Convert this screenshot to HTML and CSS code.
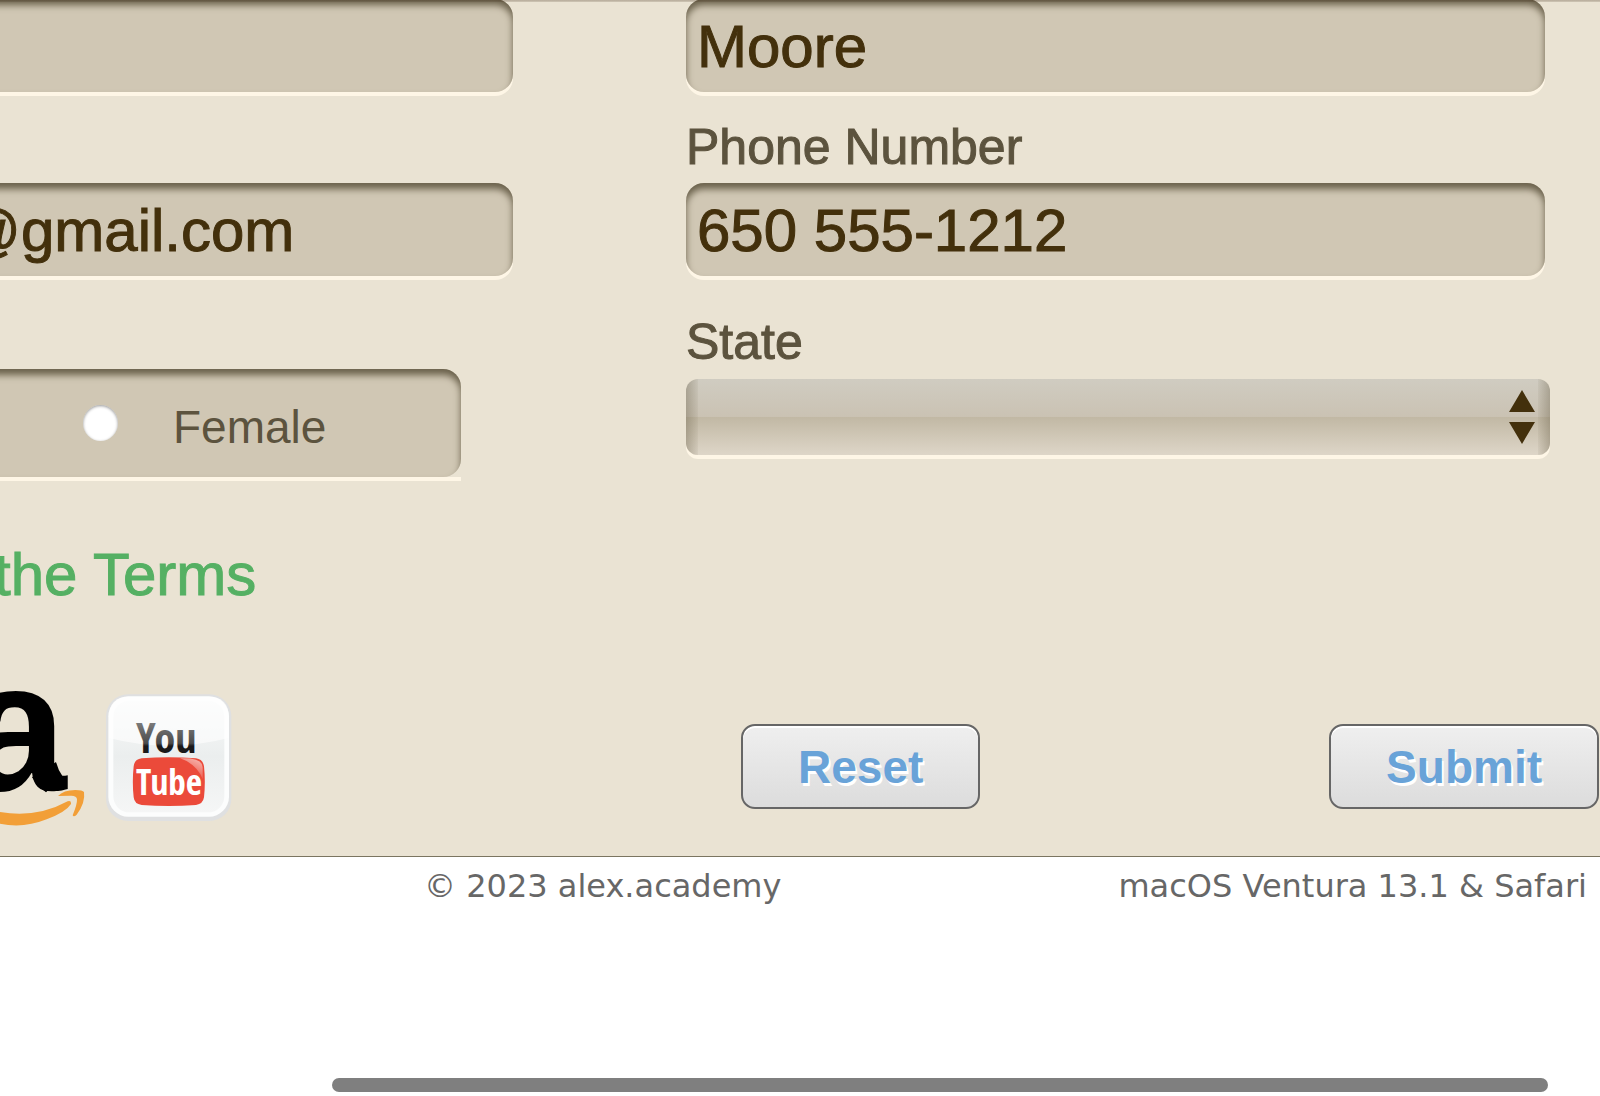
FILE: index.html
```html
<!DOCTYPE html>
<html lang="en">
<head>
<meta charset="utf-8">
<meta name="viewport" content="width=device-width, initial-scale=1">
<title>alex.academy</title>
<link rel="stylesheet" href="styles.css">
</head>
<body>
<form class="form">
  <div class="column column-left">
    <input class="field" type="text" aria-label="First Name">
    <input class="field field-email" type="text" aria-label="Email" value="@gmail.com">
    <div class="choice-wrap">
      <div class="choice">
        <input class="radio" type="radio" id="female" name="gender">
        <label class="choice-label" for="female">Female</label>
      </div>
    </div>
    <a class="terms" href="#terms">the Terms</a>
    <div class="social">
      <a class="social-link" href="#amazon" aria-label="Amazon">
        <svg class="amazon" viewBox="0 60 261 411">
          <text class="amazon-letter" x="-107" y="360">a</text>
          <path d="M96 322L168 276Q174 300 189 321L138 367Q116 352 96 322Z"/>
          <path fill="#f29f38" d="M0 426Q110 445 203 394Q214 390 213 402Q198 426 140 448Q70 476 0 461Z"/>
          <path fill="#f29f38" d="M174 378Q190 360 226 360Q248 360 252 366Q257 398 230 434Q221 442 218 436Q232 402 231 388Q230 376 211 377Z"/>
        </svg>
      </a>
      <a class="social-link" href="#youtube" aria-label="YouTube">
        <svg class="youtube" viewBox="318 70 378 381">
          <defs>
            <linearGradient id="tile" x1="0" y1="0" x2="0" y2="1">
              <stop offset="0" stop-color="#f8f9f9"/><stop offset=".5" stop-color="#ebeeee"/><stop offset="1" stop-color="#f5f6f6"/>
            </linearGradient>
            <linearGradient id="ink" gradientUnits="userSpaceOnUse" x1="0" y1="127" x2="0" y2="248">
              <stop offset="0" stop-color="#929292"/><stop offset=".75" stop-color="#4b4b4b"/><stop offset=".82" stop-color="#1b191a"/>
            </linearGradient>
            <linearGradient id="glint" x1="1" y1="0" x2=".5" y2="1">
              <stop offset="0" stop-color="#fff" stop-opacity=".65"/><stop offset="1" stop-color="#fff" stop-opacity="0"/>
            </linearGradient>
          </defs>
          <rect x="318" y="71" width="376" height="380" rx="66" fill="#dfe0e1"/>
          <rect x="325" y="77" width="362" height="361" rx="60" fill="#fcfdfd"/>
          <rect x="340" y="90" width="333" height="335" rx="48" fill="url(#tile)"/>
          <path fill="#fff" opacity=".6" d="M327 202V138Q327 78 388 78H625Q686 78 686 138V202Q506 248 327 202Z"/>
          <path fill="#eb4a3a" d="M425 263Q506 257 588 263Q609 266 612 287Q617 333 612 380Q609 400 588 403Q506 409 425 403Q403 400 401 380Q396 333 401 287Q403 266 425 263Z"/>
          <path fill="url(#glint)" d="M540 263Q608 260 608 290V325Q590 280 540 263Z"/>
          <text class="you-text" x="499" y="248" fill="url(#ink)">You</text>
          <text class="tube-text" x="507" y="374" fill="#fff">Tube</text>
        </svg>
      </a>
    </div>
  </div>
  <div class="column column-right">
    <input class="field" type="text" aria-label="Last Name" value="Moore">
    <label class="label" for="phone">Phone Number</label>
    <input class="field" type="tel" id="phone" value="650 555-1212">
    <label class="label label-state" for="state">State</label>
    <div class="select-wrap">
      <select class="select" id="state"><option></option></select>
      <svg class="arrows" viewBox="0 0 28 54"><path d="M14 0L27 22H1ZM14 54L27 32H1Z"/></svg>
    </div>
    <div class="actions">
      <button class="button" type="reset">Reset</button>
      <button class="button" type="submit">Submit</button>
    </div>
  </div>
</form>
<footer class="footer">
  <span>© 2023 alex.academy</span>
  <span>macOS Ventura 13.1 &amp; Safari</span>
</footer>
<div class="scrollbar"></div>
</body>
</html>
```
FILE: styles.css
```css
* {
  box-sizing: border-box;
}

html {
  background: #fff;
}

body {
  margin: 0;
  overflow-x: hidden;
  font-family: "Liberation Sans", Arial, sans-serif;
}

.form {
  position: relative;
  display: flex;
  gap: 173px;
  margin-left: -60px;
  padding-bottom: 29px;
  background: #eae3d3;
  border-bottom: 1px solid #7b7560;
}

.form::before {
  content: "";
  position: absolute;
  inset: 0 0 auto;
  height: 2px;
  background: linear-gradient(rgba(60, 40, 20, .3), rgba(60, 40, 20, .15));
}

.column {
  display: flex;
  flex-direction: column;
  align-items: flex-start;
  margin-top: -1px;
}

.column-left {
  flex: 0 0 573px;
}

.column-right {
  flex: 1;
  min-width: 0;
}

.field {
  width: 100%;
  height: 93px;
  margin: 0;
  padding: 2px 11px 0;
  border: 0;
  border-radius: 18px;
  outline: 0;
  background: #d0c7b4;
  box-shadow: inset 0 6px 7px #6a614b, 0 4px 0 #fef6e6;
  color: #43300c;
  font: 60px "Liberation Sans", Arial, sans-serif;
  -webkit-text-stroke: 1px;
}

.column-right .field {
  width: calc(100% - 55px);
}

.field-email {
  margin-top: 91px;
  padding-left: 20px;
}

.label {
  margin: 25px 0 6px;
  color: #5c533e;
  font-size: 50px;
  line-height: 60px;
  -webkit-text-stroke: 1px;
}

.label-state {
  margin: 36px 0 7px;
}

.choice-wrap {
  width: 521px;
  margin-top: 93px;
  border-bottom: 4px solid #fef6e6;
}

.choice {
  display: flex;
  align-items: center;
  gap: 55px;
  height: 108px;
  padding-left: 143px;
  border-radius: 18px;
  background: #d0c7b4;
  box-shadow: inset 0 6px 7px #6a614b;
}

.radio {
  appearance: none;
  width: 35px;
  height: 36px;
  margin: 0;
  border-radius: 50%;
  background: #fff;
  box-shadow: inset 0 1px 3px #999;
}

.choice-label {
  padding-top: 7px;
  color: #5c533e;
  font-size: 46px;
}

.terms {
  margin: 58px 0 0 54px;
  color: #55b063;
  font-size: 60px;
  line-height: 72px;
  text-decoration: none;
  -webkit-text-stroke: 1px;
}

.social {
  display: flex;
  align-items: flex-start;
  gap: 19px;
  margin: 79px 0 0 60px;
}

.social-link,
.social-link svg {
  display: block;
}

.amazon {
  width: 87px;
  height: 137px;
}

.amazon-letter {
  font: bold 552px "Liberation Sans", Arial, sans-serif;
}

.youtube {
  width: 126px;
  height: 127px;
  margin-top: 4px;
}

.you-text,
.tube-text {
  font: bold 126px "Liberation Sans Narrow", "Open Sans Condensed", "DejaVu Sans Condensed", sans-serif;
  text-anchor: middle;
}

.tube-text {
  font-size: 106px;
}

.select-wrap {
  position: relative;
  width: calc(100% - 50px);
}

.select {
  display: block;
  appearance: none;
  width: 100%;
  height: 76px;
  margin: 0;
  border: 0;
  border-radius: 12px;
  outline: 0;
  background:
    linear-gradient(90deg, rgba(90, 80, 55, .32), rgba(90, 80, 55, .06)) 0 0 / 12px 100% no-repeat,
    linear-gradient(270deg, rgba(90, 80, 55, .32), rgba(90, 80, 55, .06)) 100% 0 / 12px 100% no-repeat,
    linear-gradient(#d0ccc1, #cac2b3 50%, #c1b8a4 50%, #ded6c8);
  box-shadow: 0 4px 0 #fef6e6;
  font-size: 50px;
}

.arrows {
  position: absolute;
  top: 11px;
  right: 14px;
  width: 28px;
  height: 54px;
  fill: #43300c;
  pointer-events: none;
}

.actions {
  display: flex;
  justify-content: space-between;
  align-self: stretch;
  margin: 269px 1px 0 55px;
}

.button {
  height: 85px;
  padding: 0 55px;
  border: 2px solid #666;
  border-radius: 14px;
  background: linear-gradient(#efefef, #dcdcdc);
  box-shadow: inset 0 2px 0 #fff;
  color: #69a3d8;
  font: bold 46px "Liberation Sans", Arial, sans-serif;
  text-shadow: 2px 3px 0 #fff;
}

.footer {
  display: flex;
  justify-content: space-between;
  padding: 9px 13px 0 424px;
  color: #676767;
  font: 32px/40px "DejaVu Sans", Verdana, sans-serif;
}

.scrollbar {
  height: 14px;
  margin: 172px 52px 0 332px;
  border-radius: 7px;
  background: #7f7f7f;
}
```
